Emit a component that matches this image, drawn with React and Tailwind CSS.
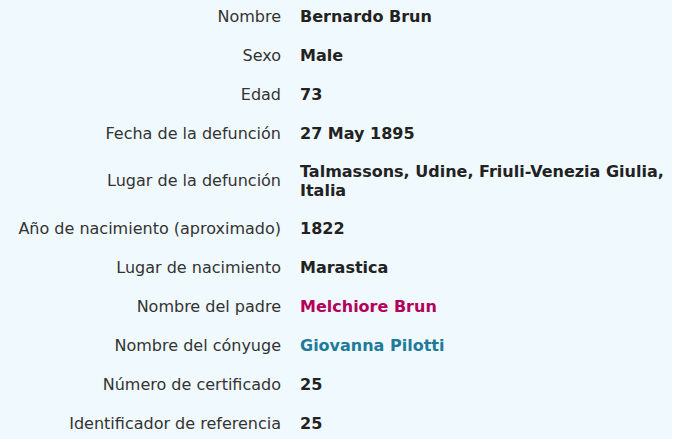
import React from "react";

const rows = [
  { label: "Nombre", value: "Bernardo Brun" },
  { label: "Sexo", value: "Male" },
  { label: "Edad", value: "73" },
  { label: "Fecha de la defunción", value: "27 May 1895" },
  { label: "Lugar de la defunción", value: "Talmassons, Udine, Friuli-Venezia Giulia, Italia" },
  { label: "Año de nacimiento (aproximado)", value: "1822" },
  { label: "Lugar de nacimiento", value: "Marastica" },
  { label: "Nombre del padre", value: "Melchiore Brun", color: "text-[#b3005a]" },
  { label: "Nombre del cónyuge", value: "Giovanna Pilotti", color: "text-[#207b9b]" },
  { label: "Número de certificado", value: "25" },
  { label: "Identificador de referencia", value: "25" },
];

export default function App() {
  return (
    <div className="w-[680px] h-[442px] bg-white overflow-hidden">
      <div
        className="w-[672px] h-[442px] bg-[#f0f9fd] text-[16px]"
        style={{ fontFamily: '"DejaVu Sans", Verdana, sans-serif' }}
      >
        <div className="-mt-[3px] flex flex-col">
          {rows.map((r) => (
            <div key={r.label} className="flex items-center py-[8.5px]">
              <div className="w-[281px] shrink-0 text-right leading-[22px] text-[#333333]">
                {r.label}
              </div>
              <div
                className={`pl-[19px] flex-1 font-bold leading-[19.5px] ${r.color || "text-[#222222]"}`}
              >
                {r.value}
              </div>
            </div>
          ))}
        </div>
      </div>
    </div>
  );
}
